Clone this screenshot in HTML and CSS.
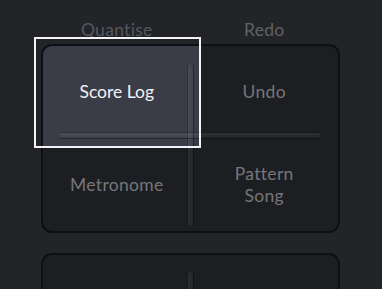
FILE: index.html
```html
<!DOCTYPE html>
<html>
<head>
<meta charset="utf-8">
<link rel="stylesheet" href="styles.css">
</head>
<body>
<div class="panel">
  <div class="labels">
    <div class="lbl">Quantise</div>
    <div class="lbl lbl-redo">Redo</div>
  </div>
  <div class="pad-wrap">
    <div class="pad">
      <div class="sel"></div>
      <div class="ridge-v"></div>
      <div class="ridge-h"></div>
      <div class="grid">
        <div class="cell cell-on">Score Log</div>
        <div class="cell">Undo</div>
        <div class="cell">Metronome</div>
        <div class="cell">Pattern<br>Song</div>
      </div>
    </div>
    <div class="focus"></div>
  </div>
  <div class="pad pad-next">
    <div class="ridge-v ridge-next"></div>
  </div>
</div>
</body>
</html>
```

FILE: styles.css
```css
html, body {
  margin: 0;
  padding: 0;
  background: #232428;
  width: 382px;
  height: 289px;
  overflow: hidden;
  font-family: Lato, "Open Sans", sans-serif;
}

.panel {
  display: flex;
  flex-direction: column;
  margin-left: 41px;
  width: 299px;
}

.labels {
  display: grid;
  grid-template-columns: 1fr 1fr;
  padding: 19px 2px 0;
  height: 25px;
}

.lbl {
  text-align: center;
  font-size: 17.5px;
  line-height: 22px;
  letter-spacing: 0.3px;
  color: #56575d;
}

.lbl-redo {
  color: #606167;
}

.pad-wrap {
  position: relative;
}

.pad {
  position: relative;
  box-sizing: border-box;
  height: 189px;
  border: 2px solid #0e0f12;
  border-radius: 11px;
  background: #1d1e22;
  overflow: hidden;
}

.sel {
  position: absolute;
  left: 0;
  top: 0;
  width: 156px;
  height: 100px;
  background: #3a3c47;
}

.ridge-v {
  position: absolute;
  left: 145px;
  top: 18px;
  width: 5px;
  height: 162px;
  border-radius: 3px;
  background: linear-gradient(90deg, rgba(255,255,255,0.08), rgba(255,255,255,0.03));
  box-shadow: 1px 0 0 rgba(0,0,0,0.35), -1px 0 0 rgba(0,0,0,0.2);
}

.ridge-h {
  position: absolute;
  left: 16px;
  top: 87px;
  width: 262px;
  height: 5px;
  border-radius: 3px;
  background: linear-gradient(180deg, rgba(255,255,255,0.08), rgba(255,255,255,0.03));
  box-shadow: 0 1px 0 rgba(0,0,0,0.35), 0 -1px 0 rgba(0,0,0,0.2);
}

.grid {
  position: relative;
  display: grid;
  grid-template-columns: 1fr 1fr;
  grid-template-rows: 1fr 1fr;
  height: 100%;
}

.cell {
  display: flex;
  align-items: center;
  justify-content: center;
  text-align: center;
  font-size: 17.5px;
  line-height: 22px;
  letter-spacing: 0.3px;
  color: #75767b;
}

.cell-on {
  color: #f2f2f4;
  letter-spacing: 0;
}

.focus {
  position: absolute;
  left: -7px;
  top: -7px;
  width: 163px;
  height: 107px;
  border: 2px solid #f4f4f6;
}

.pad-next {
  margin-top: 20px;
  height: 36px;
  border-bottom: none;
  border-bottom-left-radius: 0;
  border-bottom-right-radius: 0;
}

.ridge-next {
  top: 17px;
  height: 40px;
}
```
